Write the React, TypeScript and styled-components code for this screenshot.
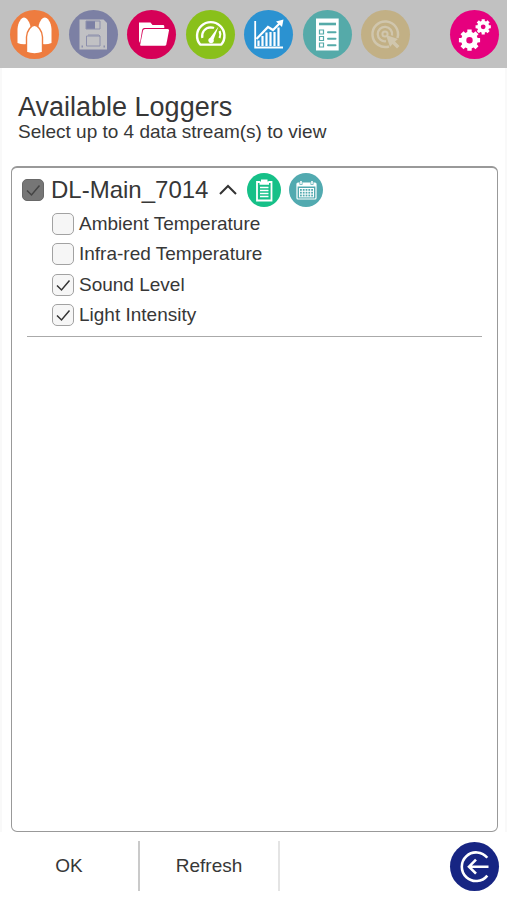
import React, { useState } from "react";
import styled, { createGlobalStyle } from "styled-components";

const GlobalStyle = createGlobalStyle`
  *, *::before, *::after { box-sizing: border-box; }
  body {
    margin: 0;
    background: #fff;
    color: #373737;
    font-family: "Liberation Sans", Arial, sans-serif;
  }
  button, input { font: inherit; color: inherit; }
`;

const Page = styled.div`
  min-height: 100vh;
  display: flex;
  flex-direction: column;
`;

const Toolbar = styled.header`
  display: flex;
  align-items: center;
  justify-content: space-between;
  height: 68px;
  padding: 0 8px 0 10px;
  background: #c1c1c1;
`;

const ToolGroup = styled.nav`
  display: flex;
  flex: 0 1 400px;
  justify-content: space-between;
`;

const RoundButton = styled.button<{ $color: string; $size?: number }>`
  flex: none;
  width: ${(p) => p.$size ?? 49}px;
  height: ${(p) => p.$size ?? 49}px;
  padding: 0;
  border: 0;
  border-radius: 50%;
  background: ${(p) => p.$color};
  cursor: pointer;
  &:disabled { cursor: default; }
  svg { display: block; width: 100%; height: 100%; }
`;

const Main = styled.main`
  flex: 1;
  display: flex;
  flex-direction: column;
  padding: 24px 7px 0 9px;
  border: solid #f9f9f9;
  border-width: 0 2px;
`;

const Heading = styled.div`
  padding: 0 7px;
  margin-bottom: 24px;
`;

const Title = styled.h1`
  margin: 0;
  font-size: 27px;
  font-weight: 400;
  line-height: 30px;
`;

const Subtitle = styled.p`
  margin: 0;
  font-size: 19px;
  line-height: 20px;
`;

const Panel = styled.section`
  flex: 1;
  padding: 5px 15px;
  border: 1px solid #999;
  border-top-width: 2px;
  border-radius: 6px;
  background: #fff;
`;

const Logger = styled.div`
  padding-bottom: 5px;
  border-bottom: 1px solid #aaa;
`;

const LoggerHead = styled.div`
  display: flex;
  align-items: center;
  gap: 8px;
  height: 34px;
  margin-left: -5px;
`;

const LoggerLabel = styled.label`
  display: flex;
  align-items: center;
  gap: 7px;
  font-size: 24px;
`;

const Toggle = styled.button`
  display: flex;
  width: 23px;
  height: 24px;
  padding: 0;
  border: 0;
  align-items: center;
  justify-content: center;
  background: none;
  cursor: pointer;
`;

const Streams = styled.ul`
  margin: 0;
  padding: 2px 0 0 25px;
  list-style: none;
`;

const StreamLabel = styled.label`
  display: flex;
  align-items: center;
  gap: 5px;
  height: 30px;
  font-size: 19px;
  line-height: 22px;
`;

const StreamItem = styled.li`
  &:nth-child(even) { padding-bottom: 1px; }
`;

const TickBox = styled.span`
  display: grid;
  flex: none;
  width: 22px;
  height: 22px;
  > * { grid-area: 1 / 1; }
  svg { width: 22px; height: 22px; pointer-events: none; }
`;

const TickInput = styled.input<{ $dark?: boolean }>`
  appearance: none;
  width: 22px;
  height: 22px;
  margin: 0;
  border: 1px solid ${(p) => (p.$dark ? "#686868" : "#a2a2a2")};
  border-radius: 5px;
  background: ${(p) => (p.$dark ? "#767676" : "#f6f6f6")};
`;

const Footer = styled.footer`
  display: flex;
  align-items: center;
  height: 68px;
  padding-right: 8px;
`;

const FooterButton = styled.button<{ $divider: string }>`
  width: 140px;
  height: 50px;
  padding: 0;
  border: 0;
  border-right: 2px solid ${(p) => p.$divider};
  background: none;
  font-size: 19px;
  cursor: pointer;
`;

const Spacer = styled.div`
  flex: 1;
`;

function SensorsIcon() {
  return (
    <svg viewBox="0 0 49 49" fill="#fff" aria-hidden="true">
      <path d="M7.500 33V19C8 12 11.500 7.500 14 7.500S20.300 12 20.800 19V33Q14 35.500 7.500 33Z" />
      <path d="M28.200 33V19C28.700 12 32 7.500 34.800 7.500S41 12 41.500 19V33Q35 35.500 28.200 33Z" />
      <path stroke="#ee7c3f" strokeWidth="1.400" d="M16.500 42.500V27C17 20 21.500 15.300 24.500 15.300S32 20 32.500 27V42.500Q24.500 45.500 16.500 42.500Z" />
    </svg>
  );
}

function SaveIcon() {
  return (
    <svg viewBox="0 0 49 49" aria-hidden="true">
      <path fill="#c1c1c4" d="M10.500 9.500H34.500L38 13V39.500H10.500Z" />
      <path fill="#7c80a4" d="M17 11h9v8h-9z" />
      <path fill="none" stroke="#8c8fac" strokeWidth="1" d="M17 11h14v8H17zM17.500 26H31v10H17.500zM19 25h10.500l1.500 1" />
      <path fill="#8c8fac" d="M12.500 35.500h1.500v2h-1.500zM34.500 35.500H36v2h-1.500z" />
    </svg>
  );
}

function FolderIcon() {
  return (
    <svg viewBox="0 0 49 49" fill="#fff" aria-hidden="true">
      <path d="M12 12.500h11.500l2 2.500H36q1.300 0 1.300 1.300V18H17.500q-2 0-2.400 2L13 33 12 31Z" />
      <path d="M18 19H40.700q1.600 0 1.300 1.600L39.300 34.500q-.3 1.300-1.600 1.300H14q-1 0-.8-1.300L16 20.600q.4-1.600 2-1.600Z" />
    </svg>
  );
}

function GaugeIcon() {
  return (
    <svg viewBox="0 0 49 49" fill="none" stroke="#fff" aria-hidden="true">
      <path strokeWidth="2.400" strokeLinejoin="round" d="M14.200 34.600A13.700 13.700 0 1 1 35.300 34.600Z" />
      <path strokeWidth="2.200" d="M16.300 28C15.300 22.500 19 17.500 24.500 17.300Q26.500 17.300 28 18" />
      <path strokeWidth="2.200" d="M33.600 21Q35.200 24.500 33.500 28" />
      <path fill="#fff" stroke="none" d="M32.500 16.500L27.600 29.500A2.700 2.700 0 1 1 24 28Z" />
    </svg>
  );
}

function ChartIcon() {
  return (
    <svg viewBox="0 0 49 49" fill="none" stroke="#fff" aria-hidden="true">
      <path strokeWidth="1.800" d="M11.200 11V37.500H39" />
      <path strokeWidth="2.200" d="M14.500 36V30.500M18.500 36V26M22.500 36V22.500M26.500 36V22M30.500 36V22M34.500 36V17.500" />
      <path strokeWidth="2.200" d="M12.500 29L24 17L29 20L36 13" />
      <path fill="#fff" stroke="none" d="M39.500 9.500L38 17L32 11.500Z" />
    </svg>
  );
}

function ListIcon() {
  return (
    <svg viewBox="0 0 49 49" aria-hidden="true">
      <path fill="#fff" d="M13 8.500H35.700V40.500H13Z" />
      <g fill="none" stroke="#55aaa9">
        <path strokeWidth="2.600" d="M16 14H33" />
        <path strokeWidth="1.200" d="M16.500 20H20.500V24H16.500ZM16.500 26.500H20.500V30.500H16.500ZM16.500 33H20.500V37H16.500Z" />
        <path strokeWidth="2" strokeLinecap="round" d="M25 22.300H32.500M25 28.800H32.500M25 35.300H32.500" />
      </g>
    </svg>
  );
}

function TargetIcon() {
  return (
    <svg viewBox="0 0 49 49" fill="none" stroke="#d0c6ad" aria-hidden="true">
      <path strokeWidth="2.500" d="M36.500 28A12.800 12.800 0 1 0 28 36.500" />
      <path strokeWidth="2.300" d="M31 25.500A7.200 7.200 0 1 0 25 31.200" />
      <circle cx="24" cy="24" r="2.600" strokeWidth="2" />
      <path fill="#d0c6ad" stroke="none" d="M25 25L37 29L34 31.500L38.500 36L36 38.500L31.500 34L29 37Z" />
    </svg>
  );
}

function gearPath(cx: number, cy: number, outer: number, inner: number, hole: number) {
  const points: string[] = [];
  for (let tooth = 0; tooth < 8; tooth++) {
    const mid = (tooth * Math.PI) / 4;
    [[-0.27, inner], [-0.2, outer], [0.2, outer], [0.27, inner]].forEach(([offset, r]) => {
      points.push(`${cx + r * Math.cos(mid + offset)} ${cy + r * Math.sin(mid + offset)}`);
    });
  }
  return `M${points.join("L")}ZM${cx - hole} ${cy}a${hole} ${hole} 0 1 0 ${2 * hole} 0a${hole} ${hole} 0 1 0 ${-2 * hole} 0Z`;
}

function SettingsIcon() {
  return (
    <svg viewBox="0 0 49 49" fill="#fff" fillRule="evenodd" aria-hidden="true">
      <path d={gearPath(19.5, 30.2, 10.8, 8.4, 3.2)} />
      <path d={gearPath(33.2, 16.8, 7.8, 6, 2.4)} />
    </svg>
  );
}

function ClipboardIcon() {
  return (
    <svg viewBox="0 0 34 34" fill="none" stroke="#fff" aria-hidden="true">
      <path strokeWidth="1.800" d="M13 9H10V27.500H24.500V9H21.500" />
      <path fill="#fff" stroke="none" d="M14 6.500h6.500v2H22v3.200h-9.500V8.500H14Z" />
      <path strokeWidth="1.500" d="M13 14.500H21.500M13 17.500H21.500M13 20.500H21.500M13 23.500H21.500" />
    </svg>
  );
}

function CalendarIcon() {
  return (
    <svg viewBox="0 0 34 34" fill="none" stroke="#fff" aria-hidden="true">
      <rect x="8" y="10" width="19" height="16" rx="1" strokeWidth="1.200" />
      <path fill="#fff" stroke="none" d="M8 10H27V13.500H8Z" />
      <path strokeWidth="1.600" d="M12 8V11M23 8V11" />
      <path stroke="#52aab0" strokeWidth=".7" d="M10.800 9.500V11.500H13.200V9.500M21.800 9.500V11.500H24.200V9.500" />
      <path strokeWidth="1" d="M10 15.500H25M10 18.300H25M10 21.100H25M10 23.900H25M10.500 15V24M13.300 15V24M16.100 15V24M18.900 15V24M21.700 15V24M24.500 15V24" />
    </svg>
  );
}

function BackIcon() {
  return (
    <svg viewBox="0 0 49 49" fill="none" stroke="#fff" strokeWidth="2.600" aria-hidden="true">
      <path d="M37.300 15.800A14.300 14.300 0 1 0 37.300 33.600" />
      <path d="M38.500 24.700H19M26 17.700L19 24.700L26 31.700" />
    </svg>
  );
}

const tools = [
  { name: "Sensors", color: "#ee7c3f", Icon: SensorsIcon },
  { name: "Save", color: "#7c80a4", Icon: SaveIcon, disabled: true },
  { name: "Open", color: "#d60057", Icon: FolderIcon },
  { name: "Meters", color: "#89c01b", Icon: GaugeIcon },
  { name: "Graph", color: "#2b92d1", Icon: ChartIcon },
  { name: "Table", color: "#55aaa9", Icon: ListIcon },
  { name: "Target", color: "#c2b085", Icon: TargetIcon, disabled: true },
];

type TickProps = {
  checked: boolean;
  dark?: boolean;
  onChange: () => void;
};

function Tick({ checked, dark, onChange }: TickProps) {
  return (
    <TickBox>
      <TickInput type="checkbox" checked={checked} onChange={onChange} $dark={dark} />
      {checked && (
        <svg viewBox="0 0 22 22" fill="none" stroke={dark ? "#444" : "#333"} strokeWidth="1.500" aria-hidden="true">
          <path d="M5 11.500L9.500 16L17.500 6.500" />
        </svg>
      )}
    </TickBox>
  );
}

const streamNames = ["Ambient Temperature", "Infra-red Temperature", "Sound Level", "Light Intensity"];

export default function App() {
  const [selected, setSelected] = useState([false, false, true, true]);
  const [open, setOpen] = useState(true);
  const anySelected = selected.some(Boolean);

  return (
    <>
      <GlobalStyle />
      <Page>
        <Toolbar>
          <ToolGroup aria-label="Tools">
            {tools.map(({ name, color, Icon, disabled }) => (
              <RoundButton key={name} $color={color} aria-label={name} disabled={disabled}>
                <Icon />
              </RoundButton>
            ))}
          </ToolGroup>
          <RoundButton $color="#e6007e" aria-label="Settings">
            <SettingsIcon />
          </RoundButton>
        </Toolbar>
        <Main>
          <Heading>
            <Title>Available Loggers</Title>
            <Subtitle>Select up to 4 data stream(s) to view</Subtitle>
          </Heading>
          <Panel>
            <Logger>
              <LoggerHead>
                <LoggerLabel>
                  <Tick
                    dark
                    checked={anySelected}
                    onChange={() => setSelected(selected.map(() => !anySelected))}
                  />
                  DL-Main_7014
                </LoggerLabel>
                <Toggle aria-label="Show streams" aria-expanded={open} onClick={() => setOpen(!open)}>
                  <svg width="20" height="12" viewBox="0 0 20 12" fill="none" stroke="#333" strokeWidth="2" aria-hidden="true">
                    <path d={open ? "M2 10L10 2L18 10" : "M2 2L10 10L18 2"} />
                  </svg>
                </Toggle>
                <RoundButton $color="#16c088" $size={34} aria-label="Logger details">
                  <ClipboardIcon />
                </RoundButton>
                <RoundButton $color="#52aab0" $size={34} aria-label="Schedule">
                  <CalendarIcon />
                </RoundButton>
              </LoggerHead>
              {open && (
                <Streams>
                  {streamNames.map((name, index) => (
                    <StreamItem key={name}>
                      <StreamLabel>
                        <Tick
                          checked={selected[index]}
                          onChange={() => setSelected(selected.map((value, i) => (i === index ? !value : value)))}
                        />
                        {name}
                      </StreamLabel>
                    </StreamItem>
                  ))}
                </Streams>
              )}
            </Logger>
          </Panel>
        </Main>
        <Footer>
          <FooterButton $divider="#cacaca">OK</FooterButton>
          <FooterButton $divider="#e4e4e4">Refresh</FooterButton>
          <Spacer />
          <RoundButton $color="#172583" aria-label="Back">
            <BackIcon />
          </RoundButton>
        </Footer>
      </Page>
    </>
  );
}
